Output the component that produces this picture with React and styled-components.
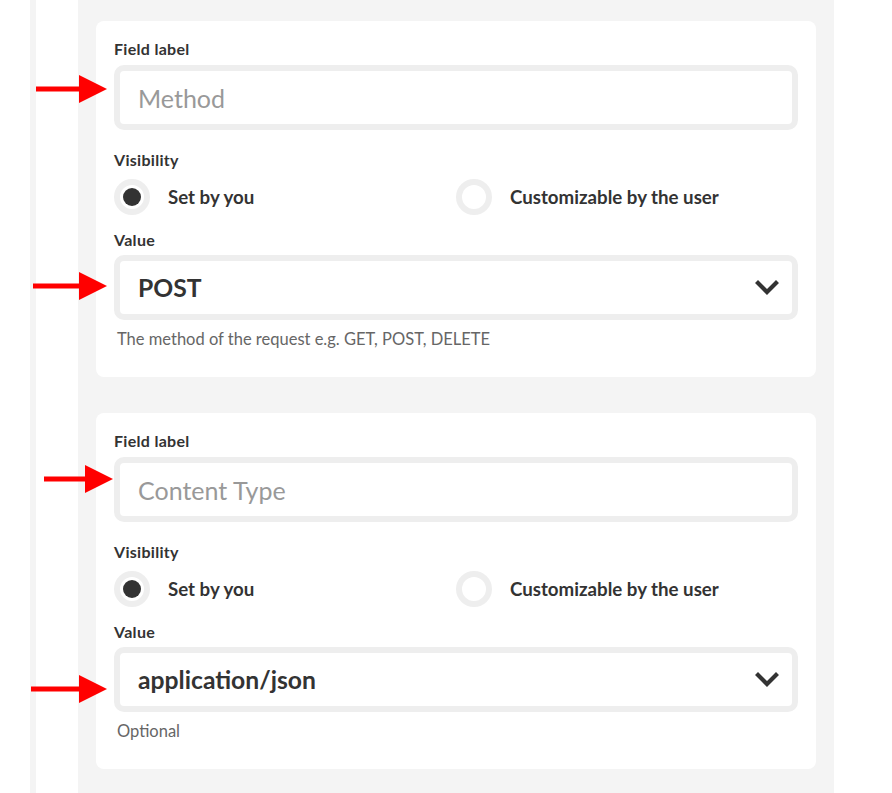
import React from "react";
import styled, { createGlobalStyle } from "styled-components";

const GlobalStyle = createGlobalStyle`
  html, body {
    margin: 0;
    padding: 0;
    background: #ffffff;
    font-family: Lato, "Noto Sans", "Liberation Sans", sans-serif;
    color: #333333;
  }
`;

const Page = styled.div`
  position: relative;
  display: flex;
  min-height: 793px;
  overflow: hidden;
`;

const Rule = styled.div`
  width: 6px;
  margin-left: 30px;
  margin-right: 42px;
  background: #f4f4f4;
`;

const Panel = styled.div`
  width: 720px;
  padding: 21px 18px;
  background: #f4f4f4;
  display: flex;
  flex-direction: column;
  gap: 36px;
`;

const Card = styled.div`
  background: #ffffff;
  border-radius: 8px;
  padding: 19px 18px 29px;
  display: flex;
  flex-direction: column;
`;

const Label = styled.div`
  font-size: 16px;
  font-weight: 700;
  line-height: 18px;
  letter-spacing: 0.3px;
  color: #333;
  margin-top: ${(p) => p.$mt || 0}px;
`;

const Box = styled.div`
  height: 53px;
  border: 6px solid #eeeeee;
  border-radius: 10px;
  display: flex;
  align-items: center;
  justify-content: space-between;
  padding: 0 13px 0 18px;
  margin-top: ${(p) => p.$mt || 0}px;
  font-size: ${(p) => (p.$placeholder ? 25 : 24.7)}px;
  font-weight: ${(p) => (p.$placeholder ? 400 : 700)};
  color: ${(p) => (p.$placeholder ? "#999999" : "#333333")};
`;

const Radios = styled.div`
  display: grid;
  grid-template-columns: 1fr 1fr;
  margin-top: 10px;
`;

const RadioItem = styled.div`
  display: flex;
  align-items: center;
  gap: 18px;
  font-size: 18.7px;
  font-weight: 700;
  color: #333;
`;

const Circle = styled.span`
  width: 24px;
  height: 24px;
  border: 6px solid #eeeeee;
  border-radius: 50%;
  display: flex;
  align-items: center;
  justify-content: center;
  &::after {
    content: "";
    width: 18px;
    height: 18px;
    border-radius: 50%;
    background: ${(p) => (p.$on ? "#333333" : "transparent")};
  }
`;

const Help = styled.div`
  font-size: 16.5px;
  line-height: 18px;
  color: #666666;
  margin-top: 10px;
  padding-left: 3px;
`;

const Arrow = styled.svg`
  position: absolute;
  left: ${(p) => p.$x}px;
  top: ${(p) => p.$y - 14}px;
  height: 28px;
`;

const Chevron = () => (
  <svg width="24" height="16" viewBox="0 0 24 16">
    <polyline
      points="3,3 12,12 21,3"
      fill="none"
      stroke="#333"
      strokeWidth="4.2"
      strokeLinecap="square"
    />
  </svg>
);

const RedArrow = ({ x, y, tip }) => {
  const w = tip - x;
  return (
    <Arrow $x={x} $y={y} width={w} viewBox={`0 0 ${w} 28`}>
      <rect x="0" y="11.5" width={w - 26} height="5" fill="#ff0000" />
      <polygon points={`${w - 28},0 ${w},14 ${w - 28},28`} fill="#ff0000" />
    </Arrow>
  );
};

const Section = ({ placeholder, value, help }) => (
  <Card>
    <Label>Field label</Label>
    <Box $mt={7} $placeholder>
      {placeholder}
    </Box>
    <Label $mt={21}>Visibility</Label>
    <Radios>
      <RadioItem>
        <Circle $on />
        Set by you
      </RadioItem>
      <RadioItem>
        <Circle />
        Customizable by the user
      </RadioItem>
    </Radios>
    <Label $mt={16}>Value</Label>
    <Box $mt={6}>
      {value}
      <Chevron />
    </Box>
    <Help>{help}</Help>
  </Card>
);

export default function App() {
  return (
    <>
      <GlobalStyle />
      <Page>
        <Rule />
        <Panel>
          <Section
            placeholder="Method"
            value="POST"
            help="The method of the request e.g. GET, POST, DELETE"
          />
          <Section
            placeholder="Content Type"
            value="application/json"
            help="Optional"
          />
        </Panel>
        <RedArrow x={36} y={89} tip={107} />
        <RedArrow x={33} y={286} tip={107} />
        <RedArrow x={44} y={479} tip={113} />
        <RedArrow x={31} y={689} tip={107} />
      </Page>
    </>
  );
}
